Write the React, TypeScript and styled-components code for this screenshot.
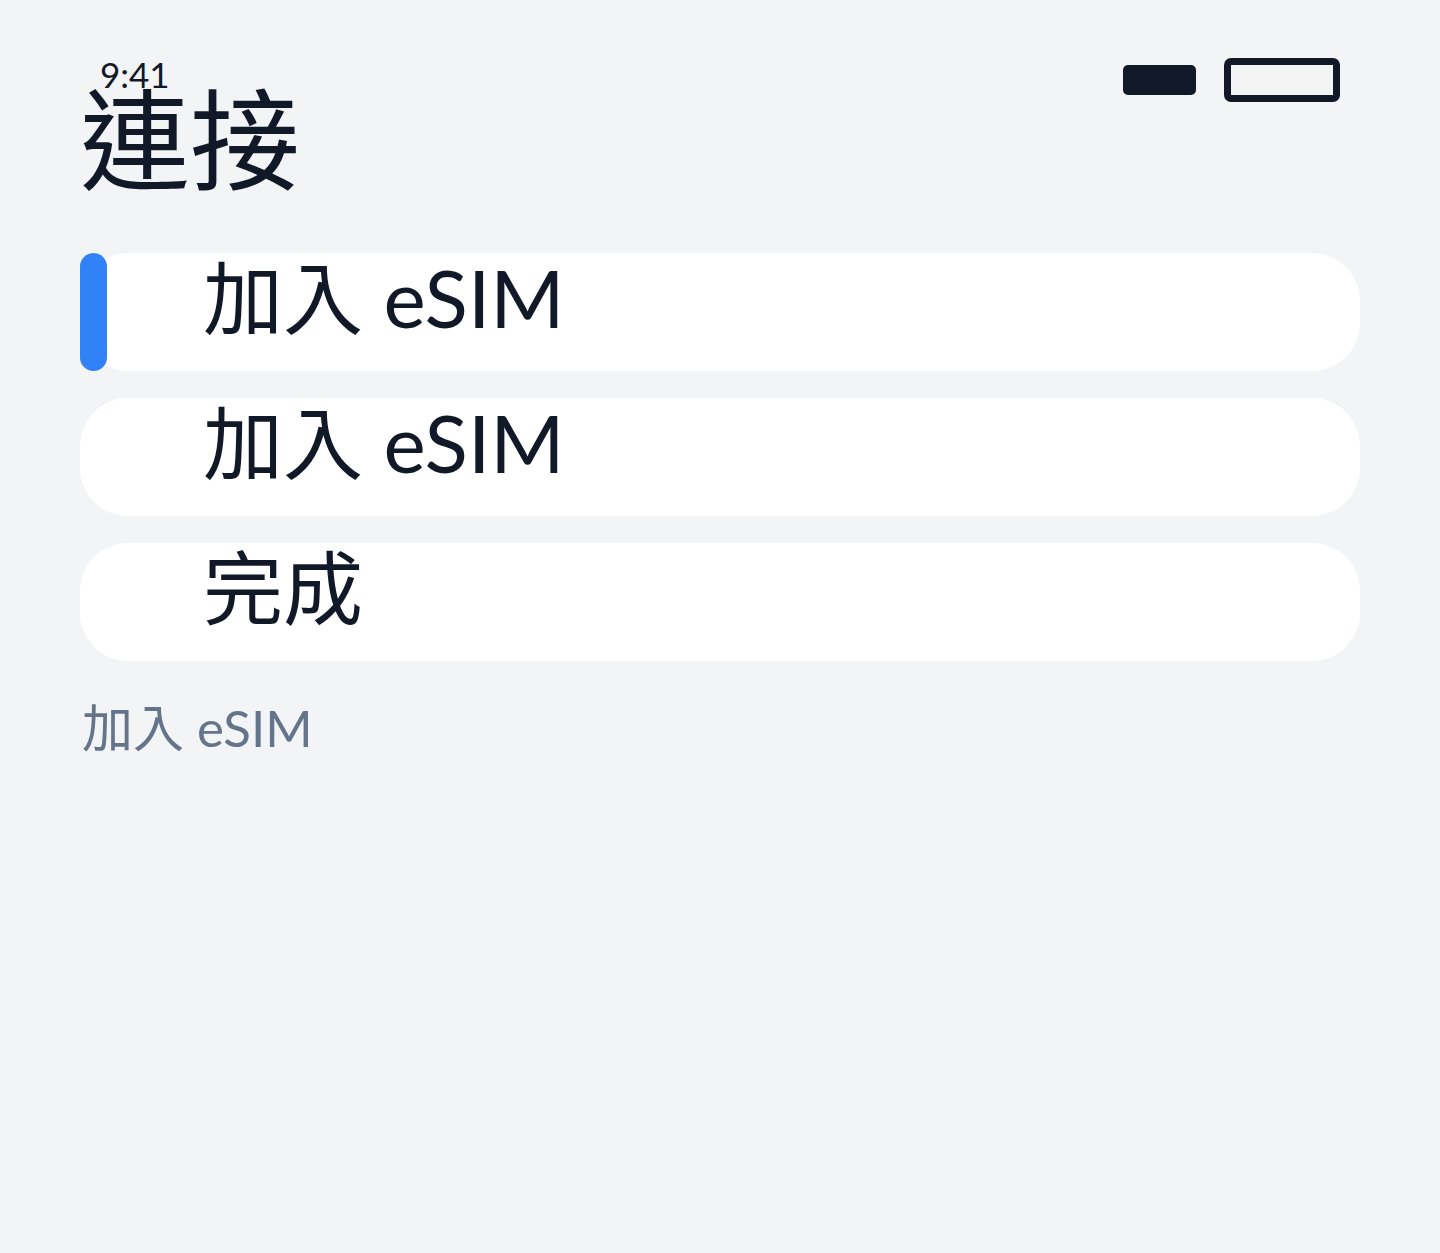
import styled, { createGlobalStyle } from 'styled-components';

/* Page Style */
const GlobalStyle = createGlobalStyle`
  html, body {
    margin: 0;
    padding: 0;
    background-color: #f3f4f6;
  }
  body {
    font-family: Lato, 'Noto Sans CJK TC', sans-serif;
    color: #111827;
  }
`;

const Screen = styled.div`
  min-height: 1253px;
  box-sizing: border-box;
  padding: 58px 80px 0;
  background-color: #f3f4f6;
`;
const StatusBar = styled.div`
  display: flex;
  justify-content: space-between;
  align-items: flex-start;
  height: 44px;
  padding: 0 20px;
`;
const Time = styled.span`
  font-size: 35px;
  line-height: 32px;
`;
const StatusIcons = styled.div`
  display: flex;
  align-items: center;
  gap: 28px;
  height: 44px;
`;
const Signal = styled.div`
  width: 73px;
  height: 30px;
  border-radius: 5px;
  background-color: #111827;
`;
const Battery = styled.div`
  width: 116px;
  height: 44px;
  box-sizing: border-box;
  border: 7px solid #111827;
  border-radius: 7px;
`;
const Title = styled.h1`
  margin: -23px 0 0;
  font-family: 'Noto Sans CJK TC', sans-serif;
  font-size: 110px;
  font-weight: 400;
  line-height: 110px;
`;
const StepList = styled.ul`
  list-style: none;
  margin: 64px 0 0;
  padding: 0;
  display: flex;
  flex-direction: column;
  gap: 27px;
`;
const Step = styled.li<{ $active?: boolean }>`
  position: relative;
  height: 118px;
  box-sizing: border-box;
  padding: 4px 0 0 123px;
  border-radius: 48px;
  background-color: #fff;
  font-size: 80px;
  line-height: 80px;
  &::before {
    content: '';
    display: ${(p) => (p.$active ? 'block' : 'none')};
    position: absolute;
    top: 0;
    left: 0;
    width: 27px;
    height: 100%;
    border-radius: 14px;
    background-color: #3182f6;
  }
`;
const Hint = styled.p`
  margin: 37px 0 0 2px;
  font-size: 51px;
  line-height: 60px;
  color: #64748b;
`;

const steps = ['加入 eSIM', '加入 eSIM', '完成'];

const App = () => {
  return (
    <>
      <GlobalStyle />
      <Screen>
        <StatusBar>
          <Time>9:41</Time>
          <StatusIcons>
            <Signal />
            <Battery />
          </StatusIcons>
        </StatusBar>
        <Title>連接</Title>
        <StepList>
          {steps.map((item, index) => (
            <Step key={index} $active={index === 0}>{item}</Step>
          ))}
        </StepList>
        <Hint>加入 eSIM</Hint>
      </Screen>
    </>
  );
};

export default App;
